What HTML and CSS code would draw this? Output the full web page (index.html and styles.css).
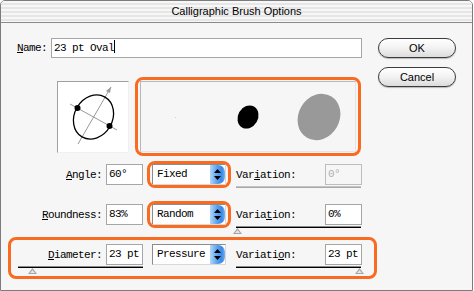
FILE: index.html
```html
<!DOCTYPE html>
<html lang="en">

<head>
	<meta charset="utf-8" />
	<title>Calligraphic Brush Options</title>
	<link rel="stylesheet" href="styles.css">
</head>

<body>
	<div class="window">
		<div class="titlebar">Calligraphic Brush Options</div>
		<div class="content">
			<div class="main">
				<div class="name-row">
					<span class="lbl name-lbl"><u>N</u>ame:</span>
					<div class="field-box name-box">23 pt Oval<span class="caret"></span></div>
				</div>

				<div class="preview-row">
					<div class="tip">
						<svg width="70" height="70" viewBox="0 0 70 70">
							<line x1="20" y1="62" x2="53" y2="5" stroke="#999" stroke-width="1"/>
							<polygon points="53,5 48,9 52,11" fill="#999"/>
							<line x1="12" y1="22" x2="59" y2="48" stroke="#999" stroke-width="1"/>
							<ellipse cx="35.5" cy="35" rx="23" ry="19" fill="none" stroke="#000" stroke-width="1.3" transform="rotate(-60 35.5 35)"/>
							<circle cx="19.5" cy="26" r="3" fill="#000"/>
							<circle cx="51.5" cy="44" r="3" fill="#000"/>
						</svg>
					</div>
					<div class="hl preview-hl">
						<div class="preview">
							<svg width="214" height="69" viewBox="0 0 214 69">
								<rect x="34" y="35" width="1" height="1" fill="#ccc"/>
								<ellipse cx="107" cy="35" rx="12" ry="10" fill="#000" transform="rotate(-60 107 35)"/>
								<ellipse cx="178" cy="35" rx="24" ry="20.5" fill="#999" transform="rotate(-60 178 35)"/>
							</svg>
						</div>
					</div>
				</div>

				<div class="row">
					<div class="group">
						<div class="line">
							<span class="lbl"><u>A</u>ngle:</span>
							<div class="field-box small">60°</div>
						</div>
					</div>
					<div class="hl sel-hl">
						<div class="select"><span class="sel-text">Fixed</span><span class="arrows"><svg width="7" height="13" viewBox="0 0 7 13"><polygon points="3.5,1 7,5 0,5" fill="#000"/><polygon points="0,8 7,8 3.5,12" fill="#000"/></svg></span></div>
					</div>
					<div class="group var">
						<div class="line">
							<span class="lbl">Var<u>i</u>ation:</span>
							<div class="field-box small off">0°</div>
						</div>
						<div class="slider off"></div>
					</div>
				</div>

				<div class="row">
					<div class="group">
						<div class="line">
							<span class="lbl"><u>R</u>oundness:</span>
							<div class="field-box small">83%</div>
						</div>
					</div>
					<div class="hl sel-hl">
						<div class="select"><span class="sel-text">Random</span><span class="arrows"><svg width="7" height="13" viewBox="0 0 7 13"><polygon points="3.5,1 7,5 0,5" fill="#000"/><polygon points="0,8 7,8 3.5,12" fill="#000"/></svg></span></div>
					</div>
					<div class="group var">
						<div class="line">
							<span class="lbl">Varia<u>t</u>ion:</span>
							<div class="field-box small">0%</div>
						</div>
						<div class="slider"><span class="thumb thumb-min"></span></div>
					</div>
				</div>

				<div class="row hl row-hl">
					<div class="group">
						<div class="line">
							<span class="lbl"><u>D</u>iameter:</span>
							<div class="field-box small">23 pt</div>
						</div>
						<div class="slider"><span class="thumb thumb-low"></span></div>
					</div>
					<div class="sel-hl plain">
						<div class="select"><span class="sel-text">Pressure</span><span class="arrows"><svg width="7" height="13" viewBox="0 0 7 13"><polygon points="3.5,1 7,5 0,5" fill="#000"/><polygon points="0,8 7,8 3.5,12" fill="#000"/></svg></span></div>
					</div>
					<div class="group var">
						<div class="line">
							<span class="lbl">Variati<u>o</u>n:</span>
							<div class="field-box small">23 pt</div>
						</div>
						<div class="slider"><span class="thumb thumb-max"></span></div>
					</div>
				</div>
			</div>

			<div class="buttons">
				<button class="btn">OK</button>
				<button class="btn">Cancel</button>
			</div>
		</div>
	</div>
</body>

</html>
```

FILE: styles.css
```css
body {
	margin: 0;
	background: #fff;
}

.window {
	width: 473px;
	height: 291px;
	box-sizing: border-box;
	border: 1px solid #7c7c7c;
	border-radius: 5px 5px 0 0;
	background: #f6f6f6;
	overflow: hidden;
}

.titlebar {
	height: 21px;
	border-bottom: 1px solid #8a8a8a;
	background: repeating-linear-gradient(#f7f7f7 0 2px, #e6e6e6 2px 4px);
	font-family: "Liberation Sans", Arial, sans-serif;
	font-size: 11px;
	line-height: 21px;
	text-align: center;
	color: #000;
}

.content {
	display: flex;
}

.main {
	width: 369px;
	padding-left: 7px;
}

.lbl,
.field-box,
.sel-text {
	font-family: "Liberation Mono", "DejaVu Sans Mono", monospace;
	font-size: 11px;
	letter-spacing: -0.6px;
	color: #000;
}

.lbl u {
	text-underline-offset: 1px;
}

.field-box {
	box-sizing: border-box;
	height: 21px;
	border: 1px solid #a6a6a6;
	background: #fff;
	padding-left: 2px;
	line-height: 19px;
	white-space: nowrap;
}

.field-box.off {
	background: #f6f6f6;
	border-color: #bdbdbd;
	color: #b0b0b0;
}

/* name row */
.name-row {
	display: flex;
	align-items: center;
	margin-top: 15px;
	padding-left: 9px;
}

.name-lbl {
	width: 34px;
}

.name-box {
	width: 311px;
	height: 20px;
	line-height: 18px;
}

.caret {
	display: inline-block;
	width: 1px;
	height: 13px;
	background: #000;
	vertical-align: -2px;
}

/* preview */
.preview-row {
	display: flex;
	align-items: center;
	margin-top: 19px;
	padding-left: 49px;
}

.tip {
	width: 72px;
	height: 72px;
	box-sizing: border-box;
	border: 1px solid #f0f0f0;
	border-top-color: #a0a0a0;
	border-left-color: #a0a0a0;
	background: #fff;
}

.tip svg {
	display: block;
}

.hl {
	border: 3px solid #fa6b22;
	border-radius: 8px;
}

.preview-hl {
	margin-left: 6px;
	padding: 1px 2px;
}

.preview {
	width: 216px;
	height: 71px;
	box-sizing: border-box;
	border: 1px solid #e4e4e4;
	border-top-color: #b8b8b8;
	border-left-color: #b8b8b8;
	background: #f6f6f6;
}

.preview svg {
	display: block;
}

/* parameter rows */
.row {
	display: flex;
	align-items: flex-start;
	box-sizing: border-box;
	height: 40px;
	border: 3px solid transparent;
	border-radius: 8px;
	padding: 4px 0 0 7px;
}

.row:first-of-type,
.preview-row + .row {
	margin-top: 1px;
}

.row-hl {
	height: 42px;
	border-color: #fa6b22;
}

.group {
	width: 125px;
}

.line {
	display: flex;
	align-items: center;
	justify-content: flex-end;
}

.line .lbl {
	margin-right: 4px;
}

.small {
	width: 37px;
}

.var .line {
	justify-content: space-between;
}

.var {
	width: 126px;
	margin-left: 5px;
}

.sel-hl {
	margin: -3px 0 0 4px;
	padding: 0 2px;
}

.sel-hl.plain {
	border: 3px solid transparent;
}

.select {
	display: flex;
	width: 74px;
	height: 21px;
	box-sizing: border-box;
	border: 1px solid #d8d8d8;
	border-top-color: #8c8c8c;
	border-left-color: #8c8c8c;
	background: #fff;
}

.sel-text {
	flex: 1;
	padding-left: 4px;
	line-height: 19px;
}

.arrows {
	width: 15px;
	display: flex;
	align-items: center;
	justify-content: center;
	border-radius: 0 7px 7px 0;
	background: linear-gradient(to right, #b4d6f8, #5ea4f0 45%, #3a88e6 80%, #7ab6f2);
}

.arrows svg {
	display: block;
}

/* sliders */
.slider {
	position: relative;
	height: 0;
	margin-top: 1px;
	border-top: 1px solid #8a8a8a;
	border-bottom: 1px solid #000;
	width: 125px;
}

.slider.off {
	border-bottom-color: #a8a8a8;
	border-top-color: #c4c4c4;
}

.thumb {
	position: absolute;
	top: 1px;
	width: 9px;
	height: 6px;
	background: linear-gradient(#a4a4a4, #a4a4a4);
	clip-path: polygon(50% 0, 100% 100%, 0 100%);
}

.thumb::after {
	content: "";
	position: absolute;
	left: 2px;
	top: 2px;
	width: 5px;
	height: 3px;
	background: #e8e8e8;
	clip-path: polygon(50% 0, 100% 100%, 0 100%);
}

.thumb-min {
	left: -3px;
}

.thumb-low {
	left: 10px;
}

.thumb-max {
	left: 119px;
}

/* buttons */
.buttons {
	display: flex;
	flex-direction: column;
	gap: 9px;
	margin: 15px 0 0 1px;
}

.btn {
	width: 78px;
	height: 20px;
	padding: 0;
	border: 1px solid #3c3c3c;
	border-radius: 10px;
	background: linear-gradient(#ffffff, #f2f2f2 50%, #dcdcdc);
	box-shadow: 0 1px 1px rgba(0, 0, 0, 0.25);
	font-family: "Liberation Sans", Arial, sans-serif;
	font-size: 11px;
	color: #000;
}
```
